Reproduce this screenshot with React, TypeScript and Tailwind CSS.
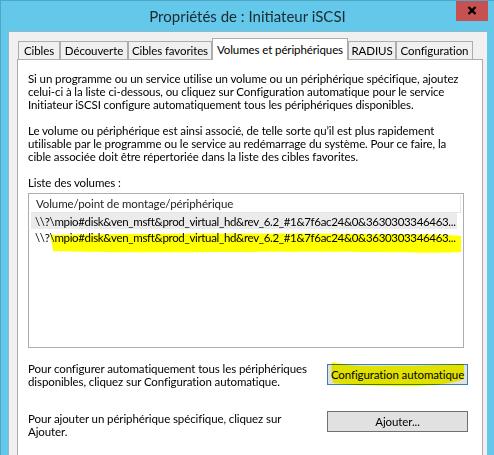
const font = { fontFamily: 'Lato, "Noto Sans", sans-serif' };

function Tab({ label, w, active }: { label: string; w: string; active?: boolean }) {
  if (active) {
    return (
      <div
        className={`relative z-10 -mb-px flex h-[22px] items-start justify-center whitespace-nowrap border border-b-0 border-[#adadad] bg-white pt-[2px] text-black ${w}`}
      >
        {label}
      </div>
    );
  }
  return (
    <div
      className={`flex h-[18px] items-center justify-center whitespace-nowrap border border-b-0 border-[#adadad] bg-[#f0f0f0] text-black ${w}`}
    >
      {label}
    </div>
  );
}

function Button({ children, primary }: { children: React.ReactNode; primary?: boolean }) {
  return (
    <div
      className={`flex h-[21px] w-[141px] items-center justify-center whitespace-nowrap border bg-[#e1e1e1] text-black ${
        primary ? "border-[#3c7fb1]" : "border-[#707070]"
      }`}
    >
      {children}
    </div>
  );
}

const row =
  "\\\\?\\mpio#disk&ven_msft&prod_virtual_hd&rev_6.2_#1&7f6ac24&0&3630303346463...";

export default function App() {
  return (
    <div
      className="relative h-[455px] w-[494px] overflow-hidden border-l border-t border-[#4fa7c6] bg-[#64c8ea] text-[11.5px] tracking-[-0.1px]"
      style={font}
    >
      {/* title bar */}
      <div className="relative flex h-[30px] items-center justify-center">
        <span className="pt-[1px] text-[15px] tracking-normal text-[#1b2a2e]">Propriétés de : Initiateur iSCSI</span>
        <div className="absolute right-[6px] top-[-1px] flex h-[21px] w-[32px] items-center justify-center bg-[#c75050]">
          <svg width="10" height="9" viewBox="0 0 10 9">
            <path d="M1.5 1 L8.5 8 M8.5 1 L1.5 8" stroke="#000" strokeWidth="2.4" />
          </svg>
        </div>
      </div>

      {/* client area */}
      <div className="ml-[7px] mr-[7px] h-full border-l border-t border-[#8fb9c9] bg-[#f0f0f0] pl-[8px] pr-[4px] pt-[6px]">
        <div className="flex items-end pl-px">
          <Tab label="Cibles" w="w-[42px]" />
          <Tab label="Découverte" w="w-[68px]" />
          <Tab label="Cibles favorites" w="w-[84px]" />
          <Tab label="Volumes et périphériques" w="w-[136px]" active />
          <Tab label="RADIUS" w="w-[48px]" />
          <Tab label="Configuration" w="w-[77px]" />
        </div>

        <div className="h-full w-[466px] border border-[#adadad] bg-white pl-[10px] pr-[15px] pt-[12px] leading-[13px] text-black">
          <p>
            Si un programme ou un service utilise un volume ou un périphérique spécifique, ajoutez
            <br />
            celui-ci à la liste ci-dessous, ou cliquez sur Configuration automatique pour le service
            <br />
            Initiateur iSCSI configure automatiquement tous les périphériques disponibles.
          </p>
          <p className="mt-[13px]">
            Le volume ou périphérique est ainsi associé, de telle sorte qu’il est plus rapidement
            <br />
            utilisable par le programme ou le service au redémarrage du système. Pour ce faire, la
            <br />
            cible associée doit être répertoriée dans la liste des cibles favorites.
          </p>
          <p className="mt-[13px]">Liste des volumes :</p>

          {/* list */}
          <div className="relative mt-[4px] h-[155px] w-[436px] border border-[#abadb3] bg-white px-[2px] pt-px">
            <div className="flex h-[18px] items-center whitespace-nowrap border-b border-r border-[#e5e5e5] pl-[5px] text-[#1e1e1e]">
              Volume/point de montage/périphérique
            </div>
            <div className="flex h-[16px] w-[426px] items-center overflow-hidden whitespace-nowrap bg-[#ebebeb] pl-[4px] tracking-[-0.33px]">
              {row}
            </div>
            <div className="relative flex h-[16px] w-[426px] items-center overflow-hidden whitespace-nowrap pl-[4px] tracking-[-0.33px]">
              {row}
            </div>
            <svg
              className="pointer-events-none absolute left-[20px] top-[38px] mix-blend-multiply"
              width="416"
              height="24"
              viewBox="0 0 416 24"
            >
              <path
                d="M2 3 C60 2 200 1 330 2 C380 2 405 3 412 4 L412 20 C380 22 300 19 200 20 C120 20 60 21 4 19 L3 12 C2 8 1 5 2 3 Z"
                fill="#ffff00"
              />
            </svg>
          </div>

          {/* actions */}
          <div className="mt-[16px] flex items-start justify-between">
            <p className="-mt-[2px] whitespace-nowrap">
              Pour configurer automatiquement tous les périphériques
              <br />
              disponibles, cliquez sur Configuration automatique.
            </p>
            <div className="relative -mr-[1px]">
              <Button primary>Configuration automatique</Button>
              <svg
                className="pointer-events-none absolute left-[3px] top-[-3px] mix-blend-multiply"
                width="136"
                height="29"
                viewBox="0 0 136 29"
              >
                <path
                  d="M2 1 C10 3 20 5 40 5 C80 5 110 4 134 3 L134 18 C120 24 90 26 60 25 C40 25 20 24 3 22 C1 15 1 8 2 1 Z"
                  fill="#ffff00"
                />
              </svg>
            </div>
          </div>

          <div className="mt-[23px] flex items-start justify-between">
            <p className="whitespace-nowrap pt-px">
              Pour ajouter un périphérique spécifique, cliquez sur
              <br />
              Ajouter.
            </p>
            <div className="-mr-[1px]">
              <Button>Ajouter...</Button>
            </div>
          </div>
        </div>
      </div>
    </div>
  );
}
